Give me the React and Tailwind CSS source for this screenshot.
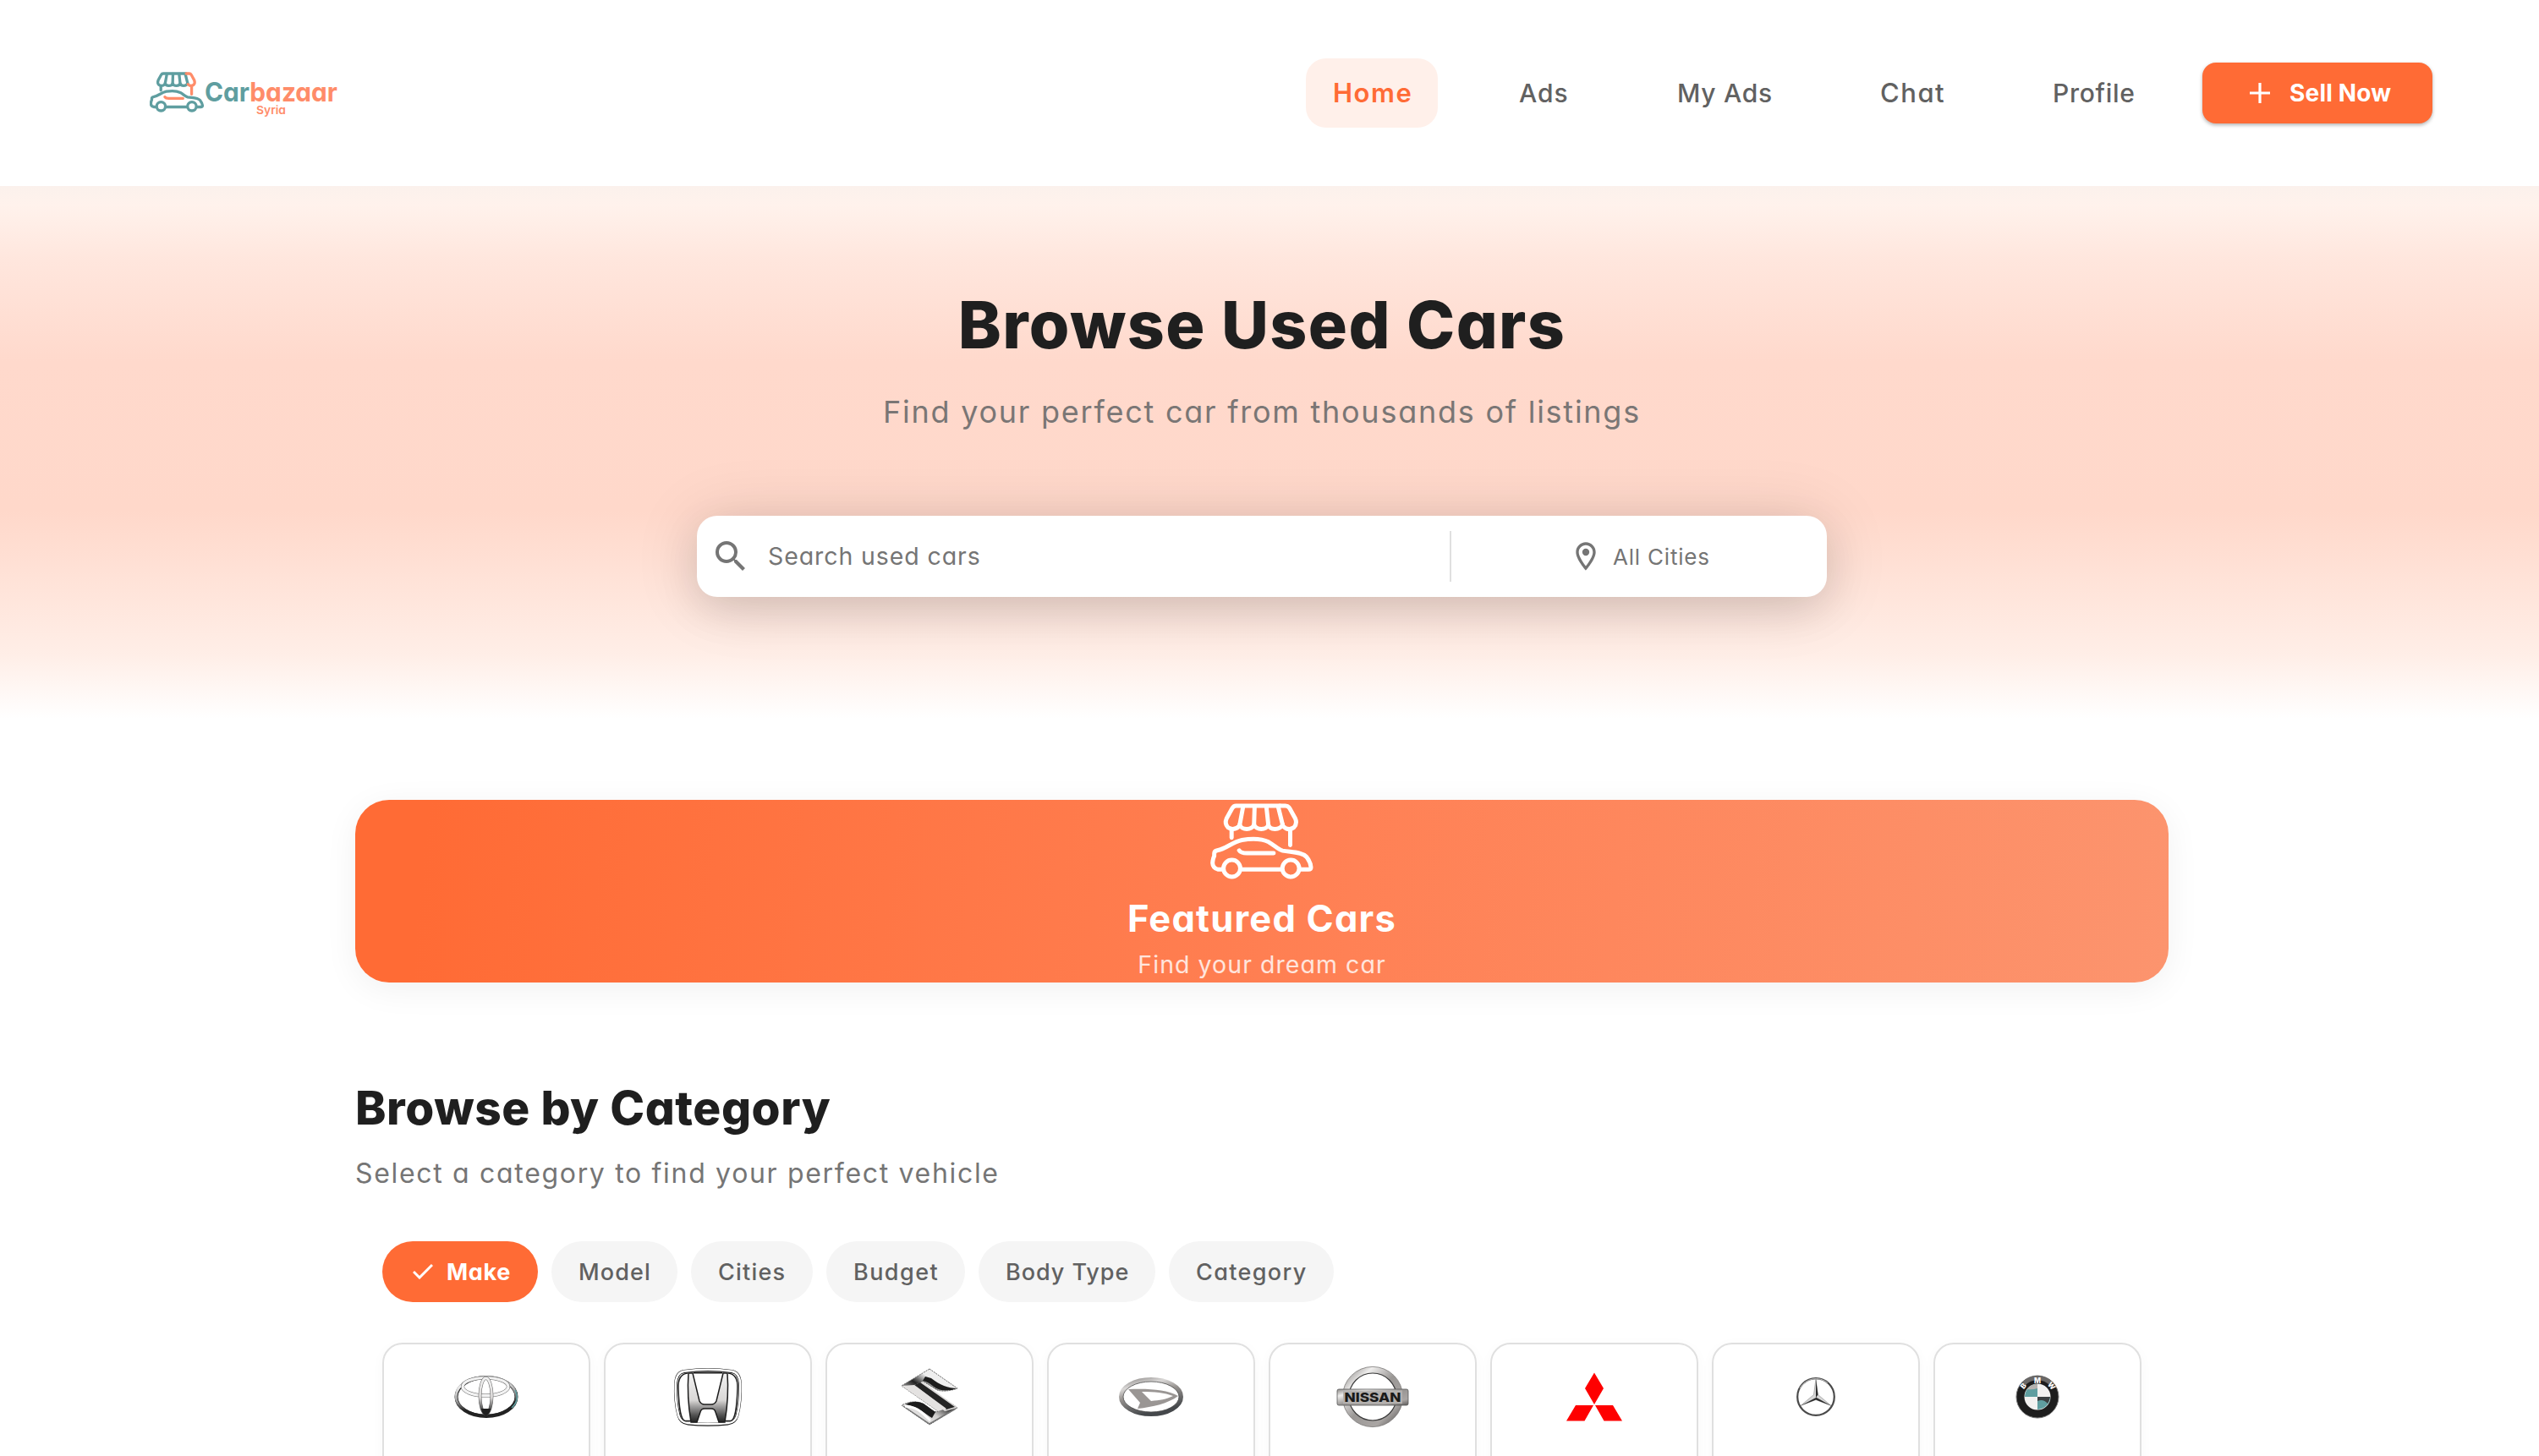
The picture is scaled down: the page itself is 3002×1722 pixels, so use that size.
import React from "react";

const navItems = [
  { label: "Home", box: "w-[156px] bg-[#fff0ea]", text: "font-semibold text-[#ff6b35] text-[31px] tracking-[1.5px]" },
  { label: "Ads", box: "w-[123px]", text: "font-medium text-[#616161] text-[30px] tracking-[1px]" },
  { label: "My Ads", box: "w-[176px]", text: "font-medium text-[#616161] text-[30px] tracking-[0.7px]" },
  { label: "Chat", box: "w-[140px]", text: "font-medium text-[#616161] text-[31px] tracking-[1.5px]" },
  { label: "Profile", box: "w-[160px]", text: "font-medium text-[#616161] text-[30px] tracking-[0.7px]" },
];

const chips = [
  { label: "Model", cls: "w-[149px] tracking-[1.1px]" },
  { label: "Cities", cls: "w-[144px] tracking-[1.2px]" },
  { label: "Budget", cls: "w-[164px] tracking-[1.45px]" },
  { label: "Body Type", cls: "w-[209px] tracking-[0.95px]" },
  { label: "Category", cls: "w-[195px] tracking-[1.35px]" },
];

/* Market awning above a car; the stall's right side and the door line take the accent colour. */
function StallCar({ main, accent, stroke, className }) {
  return (
    <svg viewBox="392 90 368 271" className={className} fill="none" stroke={main} strokeWidth={stroke} strokeLinecap="round" strokeLinejoin="round">
      <path d="M640 99H484Q475 99 470 108L450 144Q442 162 455 176Q476 190 497 170" />
      <path d="M497 166C502 187 542 187 548 166C554 187 594 187 599 166C604 187 640 187 650 166" />
      <path d="M509 102L497 166M550 102L548 166M592 102L599 166M634 102L650 166" />
      <path d="M468 184V213" />
      <path stroke={accent} d="M640 99H660Q670 99 675 108L695 144Q703 162 690 176Q670 190 652 172" />
      <path stroke={accent} d="M677 184V239" />
      <path d="M436 326H420Q401 322 400 303Q401 288 406 278V270Q406 260 417 258C450 252 470 228 505 221C540 215 575 216 600 228C625 243 635 255 650 259C680 265 715 262 735 281Q750 300 751 318Q751 326 742 326H712" />
      <path d="M501 326H647" />
      <circle cx="469" cy="322" r="30" />
      <circle cx="679" cy="322" r="30" />
      <path stroke={accent} d="M495 258C500 266 508 268 522 268H618" />
    </svg>
  );
}

function BrandLogo() {
  return (
    <div className="flex items-start w-[224px] h-[54px]">
      <StallCar main="#5f9ea0" accent="#ff8c69" stroke={19} className="w-[64px] h-[48px] shrink-0" />
      <svg viewBox="0 0 160 54" className="w-[160px] h-[54px] shrink-0 overflow-visible" style={{ fontFeatureSettings: '"cv11"' }}>
        <text x="1" y="35" fontSize="31" fontWeight="700" textLength="157" lengthAdjust="spacingAndGlyphs" fill="#5f9ea0">
          Car<tspan fill="#ff8c69">bazaar</tspan>
        </text>
        <text x="62" y="50" fontSize="13.5" fontWeight="600" textLength="35" lengthAdjust="spacingAndGlyphs" fill="#ff8c69">Syria</text>
      </svg>
    </div>
  );
}

function Defs() {
  return (
    <svg className="absolute w-0 h-0">
      <defs>
        <linearGradient id="chromeV" x1="0" y1="0" x2="0" y2="1">
          <stop offset="0" stopColor="#f2f2f2" /><stop offset="0.55" stopColor="#d9d7d6" /><stop offset="0.85" stopColor="#555" /><stop offset="1" stopColor="#222" />
        </linearGradient>
        <linearGradient id="chromeRing" x1="0" y1="0" x2="1" y2="1">
          <stop offset="0" stopColor="#8c8987" /><stop offset="0.22" stopColor="#efeeed" /><stop offset="0.5" stopColor="#9a9795" /><stop offset="0.8" stopColor="#aaa6a4" /><stop offset="1" stopColor="#5c5a59" />
        </linearGradient>
        <linearGradient id="oval" x1="0" y1="0" x2="0.4" y2="1">
          <stop offset="0" stopColor="#8a8785" /><stop offset="0.25" stopColor="#dad8d7" /><stop offset="0.5" stopColor="#96928f" /><stop offset="1" stopColor="#45484b" />
        </linearGradient>
        <linearGradient id="toyotaRing" x1="0" y1="0" x2="0.25" y2="1">
          <stop offset="0" stopColor="#888" /><stop offset="0.25" stopColor="#eee" /><stop offset="0.6" stopColor="#999" /><stop offset="0.85" stopColor="#222" />
        </linearGradient>
        <linearGradient id="suzukiBand" x1="0" y1="1" x2="0.7" y2="0">
          <stop offset="0" stopColor="#fff" /><stop offset="0.4" stopColor="#d0cecd" /><stop offset="0.62" stopColor="#202020" /><stop offset="0.8" stopColor="#eee" />
        </linearGradient>
      </defs>
    </svg>
  );
}

const Mark = ({ children }) => (
  <svg viewBox="-45 -45 90 90" className="w-[90px] h-[90px]" fill="none">{children}</svg>
);

const Toyota = () => (
  <Mark>
    <ellipse cx="0" cy="0" rx="35.5" ry="23" stroke="#222" strokeWidth="4" />
    <ellipse cx="-0.3" cy="-0.6" rx="35.6" ry="22.8" stroke="url(#toyotaRing)" strokeWidth="3" />
    <path d="M34 -8Q40 4 30 13" stroke="#5f9ea0" strokeWidth="1.5" />
    <ellipse cx="-1" cy="-12" rx="27" ry="10.5" stroke="#666" strokeWidth="4.2" />
    <ellipse cx="-1" cy="-12" rx="27" ry="10.5" stroke="#f2f2f2" strokeWidth="3.2" />
    <ellipse cx="-0.5" cy="-1" rx="7" ry="21" stroke="#666" strokeWidth="3.8" />
    <ellipse cx="-0.5" cy="-1" rx="7" ry="21" stroke="url(#chromeV)" strokeWidth="2.8" />
    <path d="M-6 14H5Q3 22 -0.5 22Q-4 22 -6 14Z" fill="#1f1f1f" />
  </Mark>
);

const Honda = () => (
  <Mark>
    <path d="M-28 -30Q0 -34 28 -30Q37 -29 38 -16Q39 5 34.500 22Q32.500 30 24 31.500Q0 34 -24 31.500Q-32.500 30 -34.500 22Q-39 5 -38 -16Q-37 -29 -28 -30Z" stroke="#1c1c1c" strokeWidth="3.800" />
    <path d="M-28 -30.300Q0 -34.300 28 -30.300Q37 -29 38.200 -16Q39 5 34.700 22Q32.500 30 24 31Q0 33.500 -24 31Q-32.500 30 -34.700 22Q-39 5 -38.200 -16Q-37 -29 -28 -30.300Z" stroke="#fff" strokeWidth="2.600" />
    <path d="M-17 -28.500H17" stroke="#1c1c1c" strokeWidth="2.200" />
    <path d="M-24 -28C-32 -27 -35.500 -20 -35 -10C-34.500 5 -33.500 27 -27 28.500H-21" stroke="#222" strokeWidth="1.500" />
    <path d="M24 -28C32 -27 35.500 -20 35 -10C34.500 5 33.500 27 27 28.500H21" stroke="#222" strokeWidth="1.500" />
    <path d="M-23 -28H-18L-10 5Q-8 9 -4 9H4Q8 9 10 5L18 -28H23Q25 0 20 30H13L9 18Q8 14 4 14H-4Q-8 14 -9 18L-13 30H-20Q-25 0 -23 -28Z" fill="url(#chromeV)" stroke="#1c1c1c" strokeWidth="1.500" />
  </Mark>
);

const Suzuki = () => (
  <Mark>
    <path d="M0 -33L33 -10Q19 -5 9 -8L-7 -18L-10 -17L33 13L0 33L-33 10Q-20 3 -8 8L6 18L10 17L-33 -13Z" fill="url(#suzukiBand)" stroke="#555" strokeWidth="0.900" strokeDasharray="2 1" />
    <path d="M-5 -24L2 -22C12 -14 22 -10 33 -10Q16 -4 5 -12Q-2 -18 -8 -19Z" fill="#1c1c1c" />
    <path d="M-18 -14L-8 -18L33 13L18 17Z" fill="#dedcdb" />
    <path d="M-18 -14L-11 -17L30 12L20 15Z" fill="#242424" />
    <path d="M-33 -13L-18 -14L20 14L10 17Z" fill="#e4e2e1" />
    <path d="M-29 9Q-18 3 -7 8L7 18L3 25C-6 20 -12 12 -29 9Z" fill="#1c1c1c" />
    <path d="M-31 11L0 32L31 14" stroke="#777" strokeWidth="1.500" />
    <path d="M-29 11C-13 12 -8 20 1 28" stroke="#fff" strokeWidth="3" />
  </Mark>
);

const Daihatsu = () => (
  <Mark>
    <ellipse rx="35.500" ry="20.500" stroke="url(#oval)" strokeWidth="5" />
    <ellipse rx="33" ry="18" stroke="#4d4d4d" strokeWidth="0.800" />
    <path fillRule="evenodd" d="M-27 -9C-4 -10 18 -9 32 -1C20 8 2 12 -16 14L-13 7ZM-11 -6L0 5C10 4 18 3 26 -1C16 -5 4 -6 -11 -6Z" fill="#9a9694" />
  </Mark>
);

const Nissan = () => (
  <Mark>
    <circle r="31.500" stroke="url(#chromeRing)" strokeWidth="8" />
    <circle r="35.600" stroke="#6b6967" strokeWidth="0.700" />
    <circle r="28" stroke="#3d3d3d" strokeWidth="1.200" />
    <rect x="-42" y="-9" width="84" height="19" rx="2" fill="url(#chromeRing)" stroke="#555" strokeWidth="0.800" />
    <rect x="-35" y="-7.500" width="70" height="15.500" fill="#b4b1af" />
    <text x="-33.500" y="6" fontSize="15" fontWeight="800" textLength="67" lengthAdjust="spacingAndGlyphs" fill="#1a1a1a">NISSAN</text>
  </Mark>
);

const Mitsubishi = () => (
  <Mark>
    <path d="M0 -28.500L11 -10L0 9L-11 -10ZM-1 10L-11.500 28.500H-33L-22 10ZM1 10L11.500 28.500H33L22 10Z" fill="#fe0000" />
  </Mark>
);

const Mercedes = () => (
  <Mark>
    <circle r="21.800" stroke="#4a4a4a" strokeWidth="2.200" />
    <path d="M-19 -10A21.800 21.800 0 0 1 14 -16.500" stroke="#bdbdbd" strokeWidth="1" />
    <path d="M0 -21L2.500 -2.500L18 10.500L0 3.500L-18 10.500L-2.500 -2.500Z" fill="#d7d7d7" stroke="#777" strokeWidth="0.500" />
    <path d="M0 -21L2.500 -2.500L0 1ZM18 10.500L0 3.500V0.500ZM-18 10.500L0 3.500V1Z" fill="#2b2b2b" />
  </Mark>
);

const Bmw = () => (
  <Mark>
    <circle r="25" fill="#1d1d1d" stroke="#777" strokeWidth="1" />
    <path d="M-16.500 -15A22.500 22.500 0 0 1 16.500 -15" stroke="#6a6867" strokeWidth="5" />
    <circle r="15.500" fill="#f2f1f0" />
    <path d="M0 0V-15A15 15 0 0 0 -15 0Z" fill="#5f9ea0" />
    <path d="M0 0H15A15 15 0 0 1 0 15Z" fill="#5f9ea0" />
    <path d="M-12 -9A15 15 0 0 1 0 -15V-10Q-6 -8 -12 -9Z" fill="#b5b2b0" />
    <path d="M0 0H15Q14.500 4 12 8Q7 2 0 5Z" fill="#3b4042" />
    <g fill="#fff" fontSize="8.500" fontWeight="800" textAnchor="middle">
      <text transform="translate(-14.500 -11) rotate(-50)">B</text>
      <text x="0" y="-16.500">M</text>
      <text transform="translate(14.500 -11) rotate(50)">W</text>
    </g>
  </Mark>
);

const makes = [Toyota, Honda, Suzuki, Daihatsu, Nissan, Mitsubishi, Mercedes, Bmw];

export default function App() {
  return (
    <div className="w-full h-[1722px] overflow-hidden bg-white whitespace-nowrap font-['Inter','Open_Sans',sans-serif]" style={{ fontFeatureSettings: '"cv11"' }}>
      <Defs />
      <header className="flex h-[220px] items-start justify-between bg-white pl-[177px] pr-[126px]">
        <div className="pt-[85px]"><BrandLogo /></div>
        <div className="flex items-center pt-[69px]">
          <nav className="flex gap-16">
            {navItems.map((n) => (
              <a key={n.label} className={`flex h-[82px] items-center rounded-[24px] pl-[32px] ${n.box}`}>
                <span className={n.text}>{n.label}</span>
              </a>
            ))}
          </nav>
          <button className="ml-[49px] flex h-[72px] w-[272px] items-center rounded-[16px] bg-[#ff6b35] pl-[56px] text-white shadow-[0_2px_4px_rgba(0,0,0,0.3)]">
            <svg viewBox="0 0 24 24" className="h-6 w-6" stroke="currentColor" strokeWidth="3.200"><path d="M12 0V24M0 12H24" /></svg>
            <span className="ml-[23px] text-[28px] font-bold tracking-[0.2px]">Sell Now</span>
          </button>
        </div>
      </header>

      <section className="flex h-[630px] flex-col items-center bg-[linear-gradient(180deg,#fbf1ec_0%,#fff2ec_3.5%,#ffe6dd_14%,#ffd9cc_33%,#ffd8ca_61%,#ffeee7_88%,#ffffff_100%)] pr-[18px]">
        <h1 className="mt-[104px] h-[120px] text-[77px] font-extrabold leading-[120px] tracking-[1.35px] text-[#1f1f1f]">Browse Used Cars</h1>
        <p className="mt-[17px] h-[52px] text-[36px] leading-[52px] tracking-[1.75px] text-[#7a7675]">Find your perfect car from thousands of listings</p>
        <div className="mt-[97px] flex h-[96px] w-[1336px] shrink-0 items-center rounded-[24px] bg-white text-[#757575] shadow-[0_16px_48px_rgba(0,0,0,0.1),0_4px_80px_rgba(0,0,0,0.12)]">
          <div className="flex w-[890px] items-center pl-[16px]">
            <svg viewBox="0 0 24 24" className="h-12 w-12" fill="currentColor"><path d="M15.500 14h-.790l-.280-.270A6.470 6.470 0 0 0 16 9.500 6.500 6.500 0 1 0 9.500 16c1.610 0 3.090-.590 4.230-1.570l.270.280v.790l5 4.990L20.490 19l-4.990-5zm-6 0C7.010 14 5 11.990 5 9.500S7.010 5 9.500 5 14 7.010 14 9.500 11.990 14 9.500 14z" /></svg>
            <span className="ml-[20px] text-[28.500px] tracking-[0.9px]">Search used cars</span>
          </div>
          <div className="h-[60px] w-[2px] bg-[#e0e0e0]" />
          <div className="flex items-center pl-[139px]">
            <svg viewBox="0 0 24 24" className="h-10 w-10" fill="currentColor"><path d="M12 2C8.130 2 5 5.130 5 9c0 5.250 7 13 7 13s7-7.750 7-13c0-3.870-3.130-7-7-7zM7 9c0-2.760 2.240-5 5-5s5 2.240 5 5c0 2.880-2.880 7.190-5 9.880C9.920 16.210 7 11.850 7 9z" /><circle cx="12" cy="9" r="2.500" /></svg>
            <span className="ml-[12px] text-[26px] tracking-[0.8px]">All Cities</span>
          </div>
        </div>
      </section>

      <main className="ml-[420px] w-[2144px]">
        <section className="mt-[96px] flex h-[216px] flex-col items-center overflow-hidden rounded-[40px] bg-[linear-gradient(96deg,#ff6b35_0%,#ff6b35_4%,#ff8155_55%,#fc946e_100%)] text-white shadow-[0_8px_40px_rgba(0,0,0,0.06)]">
          <StallCar main="#fff" accent="#fff" stroke={15} className="mt-[4px] h-[90px] w-[122px] shrink-0" />
          <h2 className="mt-[16px] h-[60px] text-[43.500px] font-bold leading-[60px] tracking-[1.2px]">Featured Cars</h2>
          <p className="mt-[5px] h-[40px] text-[28.500px] leading-[40px] tracking-[1.05px] text-white/80">Find your dream car</p>
        </section>

        <h2 className="mt-[108px] h-[80px] text-[55px] font-extrabold leading-[80px] tracking-[0.55px] text-[#1f1f1f]">Browse by Category</h2>
        <p className="mt-[13px] h-[50px] text-[32px] leading-[50px] tracking-[1.68px] text-[#757575]">Select a category to find your perfect vehicle</p>

        <div className="ml-8 mt-[55px] flex h-[72px] gap-4 text-[27px] leading-[71px]">
          <button className="flex w-[184px] items-center rounded-full bg-[#ff6b35] pl-[36px] font-bold tracking-[0.7px] text-white">
            <svg viewBox="0 0 24 18" className="h-[18px] w-[24px]" fill="none" stroke="currentColor" strokeWidth="3"><path d="M1 9L8 16L23 1" /></svg>
            <span className="ml-[16px]">Make</span>
          </button>
          {chips.map((c) => (
            <button key={c.label} className={`rounded-full bg-[#f5f5f5] pl-8 text-left font-medium text-[#616161] ${c.cls}`}>{c.label}</button>
          ))}
        </div>

        <div className="ml-8 mt-[48px] flex gap-4">
          {makes.map((Logo, i) => (
            <div key={i} className="flex h-[260px] w-[246px] shrink-0 justify-center rounded-[24px] border-2 border-[#e0e0e0] bg-white pt-[17px] shadow-[0_4px_16px_rgba(0,0,0,0.03)]">
              <Logo />
            </div>
          ))}
        </div>
      </main>
    </div>
  );
}
